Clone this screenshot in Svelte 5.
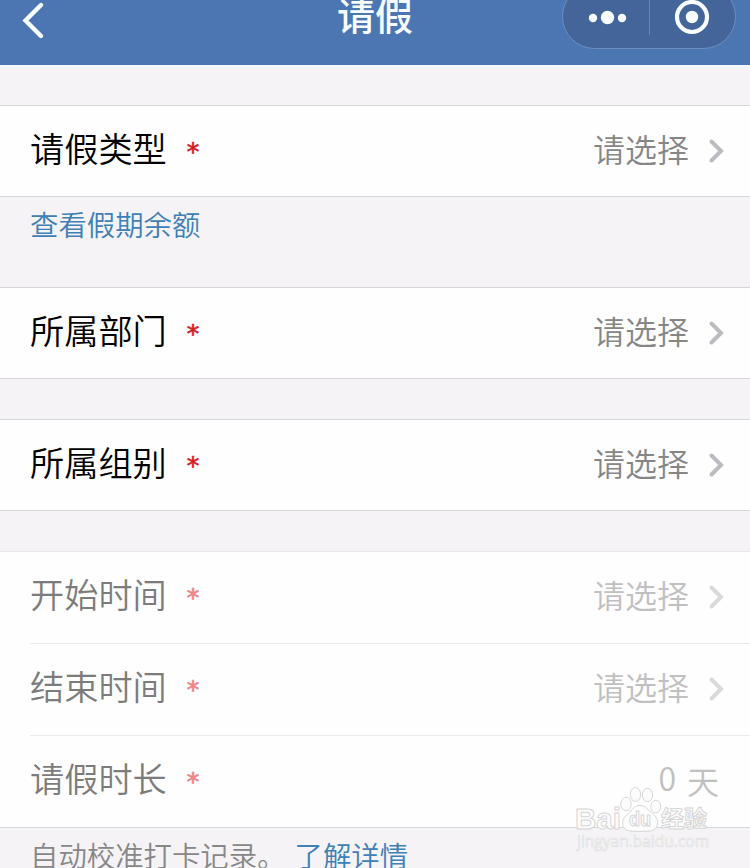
<script>
  const groups = [
    { rows: [{ label: '请假类型', value: '请选择' }], link: '查看假期余额' },
    { rows: [{ label: '所属部门', value: '请选择' }] },
    { rows: [{ label: '所属组别', value: '请选择' }] },
    {
      disabled: true,
      rows: [
        { label: '开始时间', value: '请选择' },
        { label: '结束时间', value: '请选择' },
        { label: '请假时长', amount: '0', unit: '天' }
      ]
    }
  ]
</script>

<div class="page">
  <header>
    <button class="back" aria-label="返回">
      <svg width="26" height="40" viewBox="0 0 26 40">
        <path d="M22 5 L6.5 20.5 L22 36" />
      </svg>
    </button>
    <h1>请假</h1>
    <div class="capsule">
      <svg width="174" height="64" viewBox="0 0 174 64">
        <circle cx="31" cy="34" r="4.2" />
        <circle cx="45.5" cy="33.5" r="6.7" />
        <circle cx="60" cy="34" r="4.2" />
        <path class="divider" d="M87.5 14 V51" />
        <circle class="ring" cx="130" cy="33" r="15" />
        <circle cx="130" cy="33" r="6.2" />
      </svg>
    </div>
  </header>

  <main>
    {#each groups as group}
      <section class:disabled={group.disabled} class:linked={group.link}>
        <div class="card">
          {#each group.rows as row}
            <div class="row">
              <span class="label">{row.label}</span>
              <span class="required">*</span>
              {#if row.value}
                <span class="value">{row.value}</span>
                <svg class="arrow" width="18" height="26" viewBox="0 0 18 26">
                  <path d="M3.5 3.5 L13 13 L3.5 22.5" />
                </svg>
              {:else}
                <span class="value amount"><span class="number">{row.amount}</span>{row.unit}</span>
              {/if}
            </div>
          {/each}
        </div>
        {#if group.link}
          <span class="link balance">{group.link}</span>
        {/if}
      </section>
    {/each}
  </main>

  <footer>
    <span>自动校准打卡记录。</span>
    <span class="link">了解详情</span>
  </footer>

  <svg class="watermark" width="150" height="76" viewBox="0 0 150 76">
    <text class="brand" x="3" y="51" textLength="46" lengthAdjust="spacingAndGlyphs">Bai</text>
    <g>
      <ellipse cx="54" cy="26" rx="5.2" ry="6.7" />
      <ellipse cx="63.5" cy="16.5" rx="5.2" ry="7" />
      <ellipse cx="75.5" cy="17" rx="5.2" ry="6.7" />
      <ellipse cx="83.8" cy="28.5" rx="5" ry="6.3" />
      <path d="M68 27.5 C62 27.5 60 32 56 36 C48 41 49 52 58 53 C65 53.5 71 53.5 78 53 C87 52 88 41 81 36 C76 32 74 27.5 68 27.5 Z" />
    </g>
    <text class="du" x="57" y="48" textLength="22" lengthAdjust="spacingAndGlyphs">du</text>
    <text class="cn" x="89" y="49" textLength="46" lengthAdjust="spacingAndGlyphs">经验</text>
    <text class="site" x="5" y="69" textLength="132" lengthAdjust="spacingAndGlyphs">jingyan.baidu.com</text>
  </svg>
</div>

<style>
  :global(body) {
    background: #f5f3f6;
    overflow: hidden;
  }

  .page {
    position: relative;
    height: 868px;
    overflow: hidden;
    font-family: "Noto Sans CJK SC", sans-serif;
    font-weight: 350;
    color: #000;
  }

  header {
    display: grid;
    grid-template-columns: 1fr auto 1fr;
    align-items: start;
    height: 65px;
    background: #4b76b1;
    box-shadow: 0 4px 0 #f3f7fd;
  }

  .back {
    justify-self: start;
    margin-left: 19px;
    padding: 0;
    border: 0;
    background: none;
  }

  .back svg {
    display: block;
    fill: none;
    stroke: #f8fdff;
    stroke-width: 4.4;
    stroke-linecap: round;
  }

  h1 {
    margin: -14px 0 0;
    font-size: 38px;
    line-height: 56px;
    font-weight: 500;
    color: #f6fcff;
  }

  .capsule {
    justify-self: end;
    box-sizing: border-box;
    width: 174px;
    height: 65px;
    margin: -16px 14px 0 0;
    border: 1px solid #6d8fbf;
    border-radius: 33px;
    background: #436599;
  }

  .capsule svg {
    display: block;
    margin: -1px;
    fill: #f8fdff;
  }

  .capsule .divider {
    stroke: #6987b4;
  }

  .capsule .ring {
    fill: none;
    stroke: #f8fdff;
    stroke-width: 4.2;
  }

  main {
    display: flex;
    flex-direction: column;
    gap: 40px;
    padding-top: 40px;
  }

  .linked {
    height: 142px;
  }

  .card {
    border: solid #d6d5d9;
    border-width: 1px 0;
    background: #fefefe;
  }

  .row {
    display: flex;
    align-items: center;
    box-sizing: border-box;
    height: 90px;
    margin-left: 30px;
    padding-right: 25px;
  }

  .row + .row {
    border-top: 1px solid #ebe9ee;
  }

  .label {
    font-size: 34.2px;
    line-height: 50px;
    margin-top: -8px;
  }

  .required {
    width: 13px;
    margin: 2px 0 0 20px;
    font-family: "DejaVu Sans", sans-serif;
    font-size: 25px;
    line-height: 40px;
    font-weight: 400;
    color: #d51f24;
    -webkit-text-stroke: 0.7px currentColor;
  }

  .value {
    margin: -7px 0 0 auto;
    font-size: 32px;
    line-height: 48px;
    color: #868686;
  }

  .arrow {
    margin: -1px -1px 0 19px;
    fill: none;
    stroke: #bcbcc0;
    stroke-width: 4;
    stroke-linecap: round;
  }

  .disabled .card {
    border-top-color: #e8e7ea;
  }

  .disabled .row {
    height: 91px;
    padding-bottom: 1px;
  }

  .disabled .row + .row {
    height: 92px;
  }

  .disabled .label {
    color: #7c7c7c;
  }

  .disabled .required {
    color: #ee8587;
  }

  .disabled .value {
    color: #c0c0c0;
  }

  .disabled .arrow {
    stroke: #dadadd;
  }

  .disabled .amount {
    margin: -2px 6px 0 auto;
  }

  .number {
    position: relative;
    top: -3px;
    margin-right: 11px;
  }

  .link {
    color: #3f80b5;
  }

  .balance {
    display: block;
    padding: 6px 30px 0;
    font-size: 28.4px;
    line-height: 42px;
  }

  footer {
    display: flex;
    gap: 9px;
    padding: 6px 30px 0;
    font-size: 28.4px;
    line-height: 42px;
    color: #878788;
  }

  .watermark {
    position: absolute;
    left: 572px;
    top: 778px;
    font-family: "Liberation Sans", "Noto Sans CJK SC", sans-serif;
    fill: #fcfcfc;
    stroke: #d6d6d8;
    stroke-width: 1;
    overflow: visible;
  }

  .brand {
    font-size: 30px;
    font-weight: 700;
  }

  .du {
    font-size: 20px;
    font-weight: 700;
  }

  .cn {
    font-size: 23px;
    font-weight: 700;
  }

  .site {
    font-family: "Open Sans", sans-serif;
    font-size: 17px;
    font-weight: 400;
    stroke: #dededf;
    stroke-width: 0.7;
  }
</style>
